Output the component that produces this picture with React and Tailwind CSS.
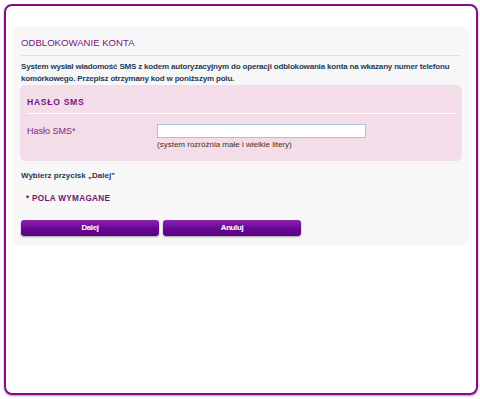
import React, { useState } from 'react';

export default function App() {
  const [code, setCode] = useState('');

  return (
    <div className="w-[480px] h-[399px] bg-white p-[4px] font-['Liberation_Sans',Arial,sans-serif]">
      <div className="h-[391px] w-[474px] rounded-[8px] border-2 border-[#850a85] shadow-[0_1px_2px_rgba(90,0,90,0.45)] pt-[21px] px-[7px]">
        <div className="rounded-[5px] bg-[#f7f7f7] pt-[9px] pb-[9px] px-[7px] h-[218px]">
          <h1 className="text-[9.6px] leading-[14px] text-[#7a1580] uppercase pb-[5px] border-b border-[#dbe3ec] mx-px">
            Odblokowanie konta
          </h1>
          <p className="mt-[5px] text-[8px] leading-[12px] font-bold text-[#1e3a5c] tracking-[-0.18px] px-[1px]">
            System wysłał wiadomość SMS z kodem autoryzacyjnym do operacji odblokowania konta na wkazany numer telefonu komórkowego. Przepisz otrzymany kod w poniższym polu.
          </p>

          <div className="rounded-[5px] bg-[#f3dde8] pt-[11px] pb-[10px] px-[7px]">
            <h2 className="text-[8.6px] leading-[13px] font-bold text-[#7a1580] tracking-[0.7px] pb-[4px] border-b border-white">
              HASŁO SMS
            </h2>
            <div className="flex mt-[10px]">
              <label className="w-[130px] text-[9px] leading-[12px] text-[#7d2a80] pt-[1px]">Hasło SMS*</label>
              <div>
                <input
                  value={code}
                  onChange={e => setCode(e.target.value)}
                  className="block w-[209px] h-[14px] bg-white border border-[#a8c1d8] outline-none text-[9px] px-1"
                />
                <div className="text-[8px] leading-[12px] text-[#333333] mt-[1px]">(system rozróżnia małe i wielkie litery)</div>
              </div>
            </div>
          </div>

          <p className="mt-[9px] text-[8px] leading-[12px] font-bold text-[#1e3a5c] px-[1px]">Wybierz przycisk „Dalej”</p>
          <p className="mt-[11px] ml-[6px] text-[8.2px] leading-[12px] font-bold text-[#6e1a70] tracking-[0.3px]">* POLA WYMAGANE</p>

          <div className="flex gap-[4px] mt-[15px] px-[1px]">
            <button className="w-[138px] h-[16px] rounded-[3px] bg-gradient-to-b from-[#8a24b0] via-[#6a0896] to-[#5a0082] text-white text-[8px] font-bold tracking-[-0.4px] shadow-[0_1px_2px_rgba(0,0,0,0.35)]">
              Dalej
            </button>
            <button className="w-[138px] h-[16px] rounded-[3px] bg-gradient-to-b from-[#8a24b0] via-[#6a0896] to-[#5a0082] text-white text-[8px] font-bold tracking-[-0.4px] shadow-[0_1px_2px_rgba(0,0,0,0.35)]">
              Anuluj
            </button>
          </div>
        </div>
      </div>
    </div>
  );
}
